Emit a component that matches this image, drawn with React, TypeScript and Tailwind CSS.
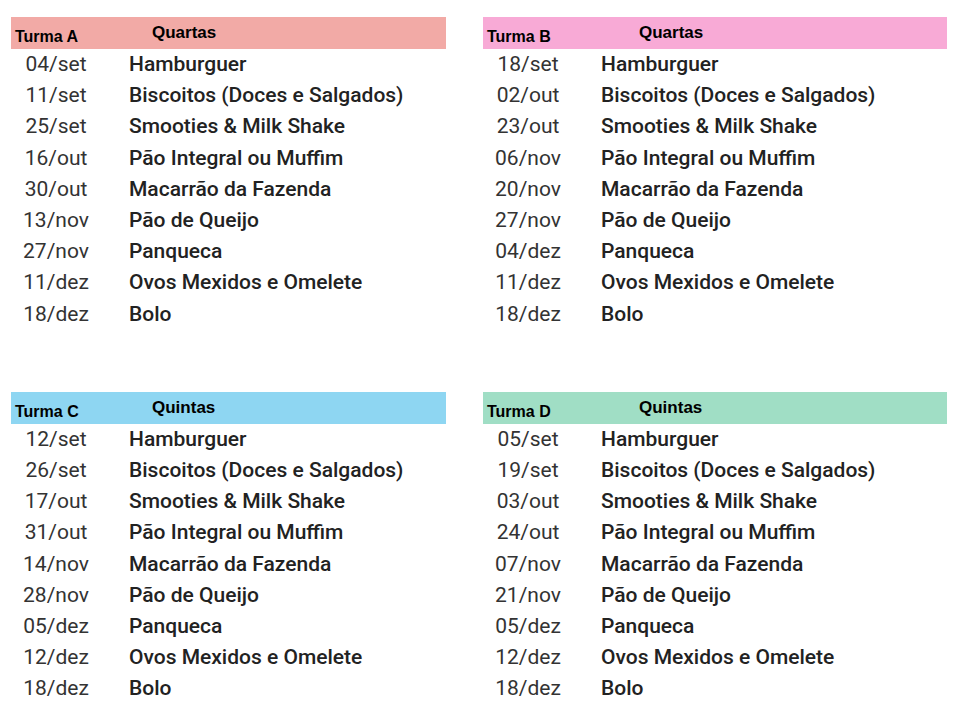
import React from "react";

type Turma = {
  name: string;
  day: string;
  color: string;
  dayOffset: string;
  dates: string[];
};

const foods = [
  "Hamburguer",
  "Biscoitos (Doces e Salgados)",
  "Smooties & Milk Shake",
  "Pão Integral ou Muffim",
  "Macarrão da Fazenda",
  "Pão de Queijo",
  "Panqueca",
  "Ovos Mexidos e Omelete",
  "Bolo",
];

const turmas: Turma[] = [
  {
    name: "Turma A",
    day: "Quartas",
    color: "bg-[#f2aaa6]",
    dayOffset: "w-[137px]",
    dates: ["04/set", "11/set", "25/set", "16/out", "30/out", "13/nov", "27/nov", "11/dez", "18/dez"],
  },
  {
    name: "Turma B",
    day: "Quartas",
    color: "bg-[#f8aad6]",
    dayOffset: "w-[152px]",
    dates: ["18/set", "02/out", "23/out", "06/nov", "20/nov", "27/nov", "04/dez", "11/dez", "18/dez"],
  },
  {
    name: "Turma C",
    day: "Quintas",
    color: "bg-[#8ed6f2]",
    dayOffset: "w-[137px]",
    dates: ["12/set", "26/set", "17/out", "31/out", "14/nov", "28/nov", "05/dez", "12/dez", "18/dez"],
  },
  {
    name: "Turma D",
    day: "Quintas",
    color: "bg-[#a0dec5]",
    dayOffset: "w-[152px]",
    dates: ["05/set", "19/set", "03/out", "24/out", "07/nov", "21/nov", "05/dez", "12/dez", "18/dez"],
  },
];

function Schedule({ t }: { t: Turma }) {
  return (
    <div>
      <div className={`${t.color} h-[32px] flex items-start pl-[4px] font-['Liberation_Sans',sans-serif] font-bold text-black`}>
        <span className={`${t.dayOffset} mt-[11px] text-[16px] leading-[18px]`}>{t.name}</span>
        <span className="mt-[6px] text-[17px] leading-[19px]">{t.day}</span>
      </div>
      {t.dates.map((d, i) => (
        <div key={d + i} className="flex h-[31.2px] items-center font-['Roboto',sans-serif] text-[21px] leading-[31px]">
          <span className="w-[90px] text-center text-[#333]">{d}</span>
          <span className="ml-[28px] font-medium text-[#222]">{foods[i]}</span>
        </div>
      ))}
    </div>
  );
}

export default function App() {
  return (
    <div className="w-[976px] h-[720px] bg-white pl-[11px] pt-[17px]">
      <div className="grid grid-cols-[435px_464px] gap-x-[37px] gap-y-[62px]">
        {turmas.map((t) => (
          <Schedule key={t.name} t={t} />
        ))}
      </div>
    </div>
  );
}
